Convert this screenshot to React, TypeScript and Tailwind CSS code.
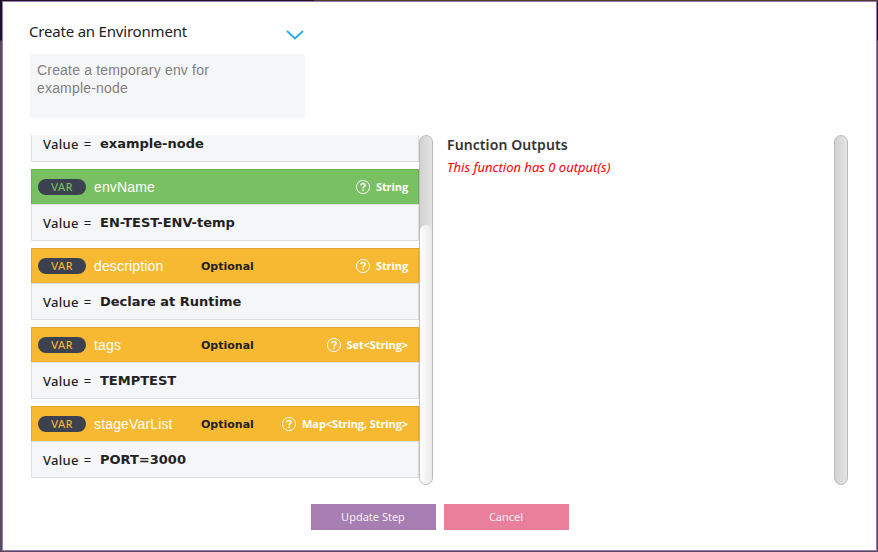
type Param = { name: string; type: string; value: string; optional?: boolean };

const params: Param[] = [
  { name: "envName", type: "String", value: "EN-TEST-ENV-temp" },
  { name: "description", type: "String", value: "Declare at Runtime", optional: true },
  { name: "tags", type: "Set<String>", value: "TEMPTEST", optional: true },
  { name: "stageVarList", type: "Map<String, String>", value: "PORT=3000", optional: true },
];

function HelpIcon() {
  return (
    <svg className="mr-[5px] shrink-0" width="16" height="16" viewBox="0 0 16 16" fill="none" stroke="white">
      <circle cx="8" cy="8" r="6.6" strokeWidth="1" />
      <path d="M5.9 6.3C6 5 6.9 4.4 8 4.4s2.1.7 2.1 1.8c0 1.5-2 1.5-2 3.2" strokeWidth="1.5" />
      <path d="M8.1 10.5v1.6" strokeWidth="1.6" />
    </svg>
  );
}

function ValueRow({ value }: { value: string }) {
  return (
    <div className="flex h-[37px] shrink-0 items-center border border-[#dcdee0] bg-[#f5f6f8] pl-[11px] text-[#222]">
      <span className="flex w-[57px] gap-[5px] font-['Noto_Sans',sans-serif] text-[13px] leading-[18px] font-medium tracking-[0.3px]">
        <span>Value</span>
        <span>=</span>
      </span>
      <span className="font-['DejaVu_Sans',sans-serif] text-[13px] leading-[18px] font-bold">{value}</span>
    </div>
  );
}

function ParamCard({ param }: { param: Param }) {
  return (
    <div className="h-[72px] shrink-0">
      <div
        className={`flex h-[35px] items-center border-x border-t pr-[10px] pl-[6px] ${
          param.optional ? "border-[#e3a62c] bg-[#f8b932]" : "border-[#69b153] bg-[#79c063]"
        }`}
      >
        <span
          className={`flex h-4 w-12 items-center justify-center rounded-full bg-[#3b414e] pt-0.5 font-[Lato,sans-serif] text-[10.5px] font-medium tracking-[0.6px] ${
            param.optional ? "text-[#f8b932]" : "text-[#79c063]"
          }`}
        >
          VAR
        </span>
        <span className="ml-2 w-[107px] font-['Liberation_Sans',sans-serif] text-[14px] leading-[18px] tracking-[0.15px] text-white">
          {param.name}
        </span>
        <span className="pt-0.5 font-['DejaVu_Sans',sans-serif] text-[11px] font-bold text-[#222]">
          {param.optional ? "Optional" : ""}
        </span>
        <span className="ml-auto flex items-center font-['Open_Sans',sans-serif] text-[11px] leading-[16px] font-bold tracking-[-0.1px] text-white">
          <HelpIcon />
          {param.type}
        </span>
      </div>
      <ValueRow value={param.value} />
    </div>
  );
}

export default function App() {
  return (
    <div className="flex h-[552px] w-[878px] flex-col bg-[linear-gradient(to_bottom,#1c1420_0,#1c1420_40px,#554b5c_41px,#554b5c_100%)]">
      <div className="ml-[314px] h-px shrink-0 bg-[#4d3b33]" />
      <div className="mr-px mb-px ml-[2px] flex flex-1 flex-col border border-[#a078b0] bg-white">
        <header className="ml-[26px] flex h-[52px] w-[276px] items-start justify-between pt-[18px]">
          <h1 className="font-['Noto_Sans',sans-serif] text-[15px] leading-[22px] tracking-[-0.2px] text-[#222]">
            Create an Environment
          </h1>
          <svg className="mt-[10px] mr-px" width="18" height="10" viewBox="0 0 18 10" fill="none" stroke="#29abe2" strokeWidth="1.8">
            <path d="M1 1l8 7.5L17 1" />
          </svg>
        </header>
        <div className="ml-[27px] h-16 w-[275px] rounded-[3px] bg-[#f5f6f8] px-[7px] pt-[7px] font-['Liberation_Sans',sans-serif] text-[14px] leading-[18px] tracking-[0.18px] text-[#808080]">
          Create a temporary env for
          <br />
          example-node
        </div>
        <main className="mt-[17px] flex h-[350px]">
          <section className="ml-7 flex h-full w-[388px] flex-col justify-end gap-[7px] overflow-hidden pb-[7px]">
            <ValueRow value="example-node" />
            {params.map((param) => (
              <ParamCard key={param.name} param={param} />
            ))}
          </section>
          <div className="h-full w-[14px] rounded-full border border-[#bdbbb7] bg-linear-to-r from-[#d2d2d2] to-[#e4e4e4]">
            <div className="mt-[89px] h-[259px] rounded-full bg-linear-to-r from-white to-[#e9e8e7]" />
          </div>
          <section className="ml-[14px] font-['Noto_Sans',sans-serif]">
            <h2 className="text-[14px] leading-5 font-semibold tracking-[0.1px] text-[#333]">Function Outputs</h2>
            <p className="mt-[2px] text-[13px] leading-5 text-[#f00] italic">This function has 0 output(s)</p>
          </section>
          <div className="mr-7 ml-auto h-full w-[14px] rounded-full border border-[#bdbbb7] bg-linear-to-r from-[#d2d2d2] to-[#e4e4e4]" />
        </main>
        <footer className="mt-[19px] ml-[308px] flex gap-2 font-['Noto_Sans',sans-serif] text-[11px] text-[#f7edf5]">
          <button className="h-[26px] w-[125px] bg-[#a67eb1] pr-px">Update Step</button>
          <button className="h-[26px] w-[125px] bg-[#ea7f9c] pr-px">Cancel</button>
        </footer>
      </div>
    </div>
  );
}
